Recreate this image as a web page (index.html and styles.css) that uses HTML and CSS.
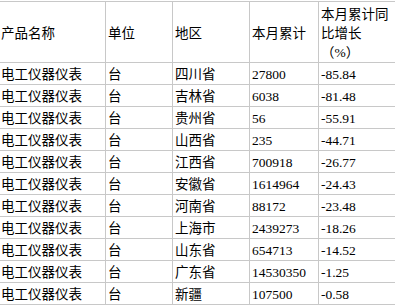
FILE: index.html
```html
<!DOCTYPE html>
<html lang="zh">
<head>
<meta charset="utf-8">
<link rel="stylesheet" href="styles.css">
</head>
<body>
<table class="grid">
  <thead>
    <tr class="head">
      <td class="c1">产品名称</td>
      <td class="c2">单位</td>
      <td class="c3">地区</td>
      <td class="c4">本月累计</td>
      <td class="c5">本月累计同<br>比增长<br>（%）</td>
    </tr>
  </thead>
  <tbody>
    <tr><td>电工仪器仪表</td><td>台</td><td>四川省</td><td>27800</td><td>-85.84</td></tr>
    <tr><td>电工仪器仪表</td><td>台</td><td>吉林省</td><td>6038</td><td>-81.48</td></tr>
    <tr><td>电工仪器仪表</td><td>台</td><td>贵州省</td><td>56</td><td>-55.91</td></tr>
    <tr><td>电工仪器仪表</td><td>台</td><td>山西省</td><td>235</td><td>-44.71</td></tr>
    <tr><td>电工仪器仪表</td><td>台</td><td>江西省</td><td>700918</td><td>-26.77</td></tr>
    <tr><td>电工仪器仪表</td><td>台</td><td>安徽省</td><td>1614964</td><td>-24.43</td></tr>
    <tr><td>电工仪器仪表</td><td>台</td><td>河南省</td><td>88172</td><td>-23.48</td></tr>
    <tr><td>电工仪器仪表</td><td>台</td><td>上海市</td><td>2439273</td><td>-18.26</td></tr>
    <tr><td>电工仪器仪表</td><td>台</td><td>山东省</td><td>654713</td><td>-14.52</td></tr>
    <tr><td>电工仪器仪表</td><td>台</td><td>广东省</td><td>14530350</td><td>-1.25</td></tr>
    <tr><td>电工仪器仪表</td><td>台</td><td>新疆</td><td>107500</td><td>-0.58</td></tr>
  </tbody>
</table>
</body>
</html>
```
FILE: styles.css
```css
html, body {
  margin: 0;
  padding: 0;
  background: #ffffff;
  overflow: hidden;
}

body {
  padding-top: 1px;
}

.grid {
  border-collapse: separate;
  border-spacing: 0;
  table-layout: fixed;
  width: 395px;
  border-top: 1px solid #c8c8c8;
  font-family: "Liberation Serif", "Noto Sans CJK SC", serif;
  font-size: 13.5px;
  line-height: 19px;
  color: #000000;
}

.grid td {
  box-sizing: border-box;
  padding: 2px 0 0 2px;
  border-bottom: 1px solid #c8c8c8;
  border-right: 1px solid #c8c8c8;
  vertical-align: middle;
  white-space: nowrap;
  height: 22px;
  overflow: hidden;
}

.grid td:first-child {
  padding-left: 1px;
}

.grid td:last-child {
  border-right: none;
}

.grid .head td {
  height: 59px;
  padding-top: 3px;
}

.c1 { width: 106px; }
.c2 { width: 67px; }
.c3 { width: 77px; }
.c4 { width: 69px; }
.c5 { width: 76px; }
```
